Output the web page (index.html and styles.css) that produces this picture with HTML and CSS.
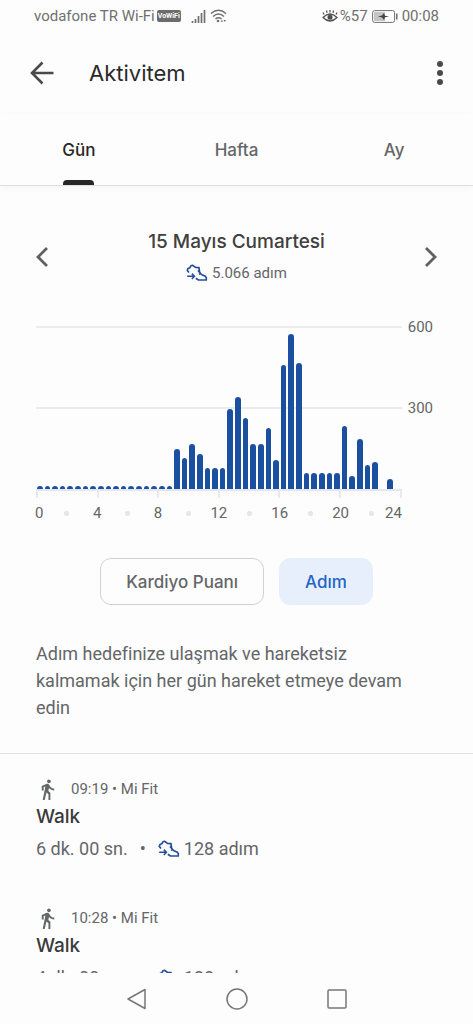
FILE: index.html
```html
<!DOCTYPE html>
<html lang="tr">
<head>
<meta charset="utf-8">
<meta name="viewport" content="width=device-width, initial-scale=1">
<title>Aktivitem</title>
<link rel="stylesheet" href="styles.css">
</head>
<body>
<svg class="defs" aria-hidden="true">
  <symbol id="shoe" viewBox="0 0 22 18">
    <path d="M3 8.500L1.300 6.500L2 4.500L3.800 3.800L5 1.700L6.500 1.300L9.500 3.400L13 3.600L13.600 8.300L15.500 10.500L19.300 12.200Q20.800 13.500 20.300 16H12.500L9.800 14.300M13.300 6.800L11.800 7.600M14.500 9.400L13 10.200" fill="none" stroke="currentColor" stroke-width="1.700" stroke-linejoin="round"/>
    <path d="M1.200 12.300H8M5.800 9.600L8.500 12.300L5.800 15" fill="none" stroke="currentColor" stroke-width="1.500"/>
  </symbol>
  <symbol id="walk" viewBox="0 0 24 24">
    <path fill="currentColor" d="M13.500 5.500c1.100 0 2-.9 2-2s-.9-2-2-2-2 .9-2 2 .9 2 2 2zM9.800 8.900L7 23h2.100l1.800-8 2.100 2v6h2v-7.500l-2.100-2 .6-3C14.800 12 16.800 13 19 13v-2c-1.900 0-3.500-1-4.300-2.400l-1-1.600c-.4-.6-1-1-1.700-1-.3 0-.5.100-.8.100L6 8.300V13h2V9.600l1.800-.7"/>
  </symbol>
</svg>
<div class="phone">
  <div class="status">
    <span>vodafone TR Wi-Fi</span>
    <span class="vowifi">VoWiFi</span>
    <svg class="signal" viewBox="0 0 16 14" aria-hidden="true"><path d="M1.500 14V12M4.500 14V10M7.500 14V7M10.500 14V4M13.500 14V1" stroke="currentColor" stroke-width="1.700"/></svg>
    <svg class="wifi" viewBox="0 0 17 14" aria-hidden="true"><path d="M1 4.500Q8.500-2 16 4.500M3 7.500Q8.500 2.500 14 7.500M5.500 10Q8.500 7.500 11.500 10" fill="none" stroke="currentColor" stroke-width="1.500"/><circle cx="8" cy="12" r="1.300" fill="currentColor"/><path d="M10.500 12.800l1.500-2 1 2zM13.500 11h2.500l-1.200 2z" fill="currentColor"/></svg>
    <svg class="eye" viewBox="0 0 16 14" aria-hidden="true"><path d="M1 8.500Q8 1.500 15 8.500Q8 15.500 1 8.500zM2 5.500L1 3.500M5 3.800L4.500 1.500M8 3.500V1M11 3.800L11.500 1.500M14 5.500L15 3.500" fill="none" stroke="currentColor" stroke-width="1.200"/><circle cx="8" cy="8.300" r="2.500" fill="currentColor"/></svg>
    <span>%57</span>
    <svg class="battery" viewBox="0 0 26 13" aria-hidden="true"><rect x="2" y="2" width="11" height="9" fill="#c4c4c4"/><rect x=".6" y=".6" width="22" height="11.800" rx="2" fill="none" stroke="currentColor" stroke-width="1"/><path d="M24.800 3.500v6" stroke="currentColor" stroke-width="1.500"/><path d="M6 6.500l4-1 2-2.500 1 2.800 4 .7-4 .8-1 2.700-2-2.500z" fill="#444"/></svg>
    <span>00:08</span>
  </div>

  <header class="appbar">
    <button class="icon-button" aria-label="Geri"><svg width="24" height="24" viewBox="0 0 24 24"><path d="M23.500 12H2M12.500 1.500L2 12L12.500 22.500" fill="none" stroke="currentColor" stroke-width="2.600"/></svg></button>
    <h1>Aktivitem</h1>
    <button class="icon-button" aria-label="Diğer seçenekler"><svg width="6" height="24" viewBox="0 0 6 24"><g fill="currentColor"><circle cx="3" cy="3" r="3"/><circle cx="3" cy="12" r="3"/><circle cx="3" cy="21" r="3"/></g></svg></button>
  </header>

  <nav class="tabs">
    <button class="tab active">Gün</button>
    <button class="tab">Hafta</button>
    <button class="tab">Ay</button>
  </nav>

  <main>
    <section class="day">
      <button class="icon-button" aria-label="Önceki gün"><svg width="12" height="20" viewBox="0 0 12 20"><path d="M11 1L2 10L11 19" fill="none" stroke="currentColor" stroke-width="2.800"/></svg></button>
      <div class="day-text">
        <h2>15 Mayıs Cumartesi</h2>
        <p class="steps"><svg class="shoe"><use href="#shoe"/></svg>5.066 adım</p>
      </div>
      <button class="icon-button" aria-label="Sonraki gün"><svg width="12" height="20" viewBox="0 0 12 20"><path d="M1 1L10 10L1 19" fill="none" stroke="currentColor" stroke-width="2.800"/></svg></button>
    </section>

    <section class="chart" aria-label="Saatlik adım grafiği">
      <div class="plot">
        <div class="bars">
          <i style="height:2%"></i><i style="height:2%"></i><i style="height:2%"></i><i style="height:2%"></i><i style="height:2%"></i><i style="height:2%"></i>
          <i style="height:2%"></i><i style="height:2%"></i><i style="height:2%"></i><i style="height:2%"></i><i style="height:2%"></i><i style="height:2%"></i>
          <i style="height:2%"></i><i style="height:2%"></i><i style="height:2%"></i><i style="height:2%"></i><i style="height:2%"></i><i style="height:2%"></i>
          <i style="height:25%"></i><i style="height:19%"></i><i style="height:28%"></i><i style="height:22%"></i><i style="height:13%"></i><i style="height:13%"></i>
          <i style="height:13%"></i><i style="height:50%"></i><i style="height:57%"></i><i style="height:44%"></i><i style="height:28%"></i><i style="height:28%"></i>
          <i style="height:38%"></i><i style="height:18%"></i><i style="height:77%"></i><i style="height:96%"></i><i style="height:78%"></i><i style="height:10%"></i>
          <i style="height:10%"></i><i style="height:10%"></i><i style="height:10%"></i><i style="height:10%"></i><i style="height:39%"></i><i style="height:8%"></i>
          <i style="height:31%"></i><i style="height:15%"></i><i style="height:17%"></i><i style="height:0%"></i><i style="height:6%"></i><i style="height:0%"></i>
        </div>
        <div class="ticks"><b></b><b></b><b></b><b></b><b></b><b></b></div>
        <div class="hours"><span>0</span><b></b><span>4</span><b></b><span>8</span><b></b><span>12</span><b></b><span>16</span><b></b><span>20</span><b></b><span>24</span></div>
      </div>
      <div class="scale"><span>600</span><span>300</span></div>
    </section>

    <div class="chips">
      <button class="chip">Kardiyo Puanı</button>
      <button class="chip selected">Adım</button>
    </div>

    <p class="advice">Adım hedefinize ulaşmak ve hareketsiz kalmamak için her gün hareket etmeye devam edin</p>

    <section class="log">
      <article class="entry">
        <p class="source"><svg class="walk"><use href="#walk"/></svg>09:19 • Mi Fit</p>
        <h3>Walk</h3>
        <p class="detail"><span>6 dk. 00 sn.</span><span class="dot">•</span><svg class="shoe"><use href="#shoe"/></svg><span>128 adım</span></p>
      </article>
      <article class="entry">
        <p class="source"><svg class="walk"><use href="#walk"/></svg>10:28 • Mi Fit</p>
        <h3>Walk</h3>
        <p class="detail"><span>4 dk. 00 sn.</span><span class="dot">•</span><svg class="shoe"><use href="#shoe"/></svg><span>128 adım</span></p>
      </article>
    </section>
  </main>

  <nav class="system">
    <button aria-label="Geri"><svg width="22" height="22" viewBox="0 0 22 22"><path d="M19 1.500V20.500L2 11z" fill="none" stroke="currentColor" stroke-width="1.500" stroke-linejoin="round"/></svg></button>
    <button aria-label="Ana ekran"><svg width="22" height="22" viewBox="0 0 22 22"><circle cx="11" cy="11" r="10" fill="none" stroke="currentColor" stroke-width="1.500"/></svg></button>
    <button aria-label="Son uygulamalar"><svg width="22" height="22" viewBox="0 0 22 22"><rect x="2" y="2" width="18" height="18" rx="1" fill="none" stroke="currentColor" stroke-width="1.500"/></svg></button>
  </nav>
</div>
</body>
</html>
```

FILE: styles.css
```css
* { box-sizing: border-box; }
body {
  margin: 0;
  background: #fdfdfd;
  color: #646668;
  font-family: Roboto, sans-serif;
}
h1, h2, h3, p { margin: 0; }
button {
  padding: 0;
  border: 0;
  background: none;
  color: inherit;
  font: inherit;
}
svg { display: block; flex: none; }
.defs { position: absolute; width: 0; height: 0; }

.phone {
  display: flex;
  flex-direction: column;
  height: 100vh;
}

.status {
  display: flex;
  align-items: center;
  height: 32px;
  padding: 0 34px;
  color: #707070;
  font-size: 15px;
}
.vowifi {
  margin-left: 2px;
  padding: 0 1px;
  border-radius: 2px;
  background: #6c6c6c;
  color: #fff;
  font-size: 7px;
  font-weight: 700;
  line-height: 12px;
}
.signal { width: 16px; height: 14px; margin-left: 10px; }
.wifi { width: 17px; height: 14px; margin-left: 3px; }
.eye { width: 16px; height: 14px; margin: 0 2px 0 auto; color: #4c4c4c; }
.battery { width: 26px; height: 13px; margin: 0 4px; }

.icon-button {
  display: flex;
  align-items: center;
  justify-content: center;
  width: 24px;
  height: 48px;
  color: #4a4a4a;
}
.appbar {
  display: flex;
  align-items: center;
  height: 82px;
  padding: 0 21px 0 30px;
}
h1 {
  flex: 1;
  margin-left: 35px;
  color: #2a2a2a;
  font-family: Inter, sans-serif;
  font-size: 22px;
  font-weight: 400;
}

.tabs {
  display: grid;
  grid-template-columns: repeat(3, 1fr);
  height: 72px;
  border-bottom: 1px solid #dedede;
  box-shadow: 0 2px 6px #0000000a;
}
.tab {
  display: flex;
  flex-direction: column;
  align-items: center;
  padding-top: 24px;
  font-family: Inter, sans-serif;
  font-size: 17px;
  font-weight: 500;
  line-height: 24px;
}
.active { color: #262626; }
.active::after {
  content: "";
  width: 31px;
  height: 5px;
  margin-top: auto;
  border-radius: 4px 4px 0 0;
  background: #262626;
}

main { flex: 1; min-height: 0; overflow: hidden; }

.day {
  display: flex;
  align-items: center;
  justify-content: space-between;
  padding: 40px 30px 0;
}
.day .icon-button { color: #606060; }
.day-text { text-align: center; }
h2 {
  color: #404040;
  font-family: Inter, sans-serif;
  font-size: 19px;
  font-weight: 500;
  line-height: 32px;
}
.steps {
  display: flex;
  align-items: center;
  justify-content: center;
  gap: 4px;
  font-size: 15px;
  line-height: 30px;
}
.shoe { width: 22px; height: 18px; color: #234d9b; }

.chart {
  display: flex;
  gap: 6px;
  padding: 38px 40px 0 36px;
}
.plot { flex: 1; }
.bars {
  display: grid;
  grid-template-columns: repeat(48, 1fr);
  align-items: end;
  height: 163px;
  border-top: 2px solid #ececec;
  background: linear-gradient(#ececec, #ececec) 0 79px / 100% 2px no-repeat;
}
.bars i {
  margin: 0 1px;
  border-radius: 3px 3px 0 0;
  background: #1a509f;
}
.ticks {
  display: grid;
  grid-template-columns: repeat(6, 1fr);
  height: 9px;
  border-top: 2px solid #e4e6f4;
  border-right: 2px solid #e8e8ee;
}
.ticks b { border-left: 2px solid #e8e8ee; }
.hours {
  display: grid;
  grid-template-columns: repeat(13, 1fr);
  align-items: center;
  margin: 5px -15px 0;
  font-size: 15px;
  line-height: 20px;
  text-align: center;
}
.hours span:first-child { padding-left: 6px; }
.hours span:last-child { margin: 0 8px 0 -8px; }
.hours b {
  width: 5px;
  height: 5px;
  margin: 0 auto;
  border-radius: 2px;
  background: #e6e6e6;
}
.scale {
  display: flex;
  flex-direction: column;
  gap: 61px;
  margin-top: -9px;
  font-size: 15px;
  line-height: 20px;
}

.chips {
  display: flex;
  justify-content: center;
  gap: 15px;
  margin-top: 35px;
}
.chip {
  height: 47px;
  padding: 0 25px;
  border: 1px solid #d2d2d2;
  border-radius: 11px;
  font-family: Inter, sans-serif;
  font-size: 17px;
  font-weight: 500;
}
.selected {
  border-color: #e7effd;
  background: #e7effd;
  color: #2364c4;
}

.advice {
  padding: 35px 56px 32px 36px;
  font-size: 18px;
  line-height: 27px;
}

.log {
  display: grid;
  gap: 39px;
  padding: 22px 36px;
  border-top: 1px solid #e2e2e2;
}
.source {
  display: flex;
  align-items: center;
  gap: 12px;
  font-size: 15px;
  line-height: 26px;
}
.walk { width: 23px; height: 23px; }
h3 {
  color: #3a3a3a;
  font-family: Inter, sans-serif;
  font-size: 19px;
  font-weight: 500;
  line-height: 30px;
}
.detail {
  display: flex;
  align-items: center;
  gap: 4px;
  font-size: 18px;
  line-height: 34px;
}
.dot { margin: 0 8px; }

.system {
  display: flex;
  align-items: center;
  justify-content: center;
  gap: 78px;
  height: 51px;
  color: #777;
}
```
